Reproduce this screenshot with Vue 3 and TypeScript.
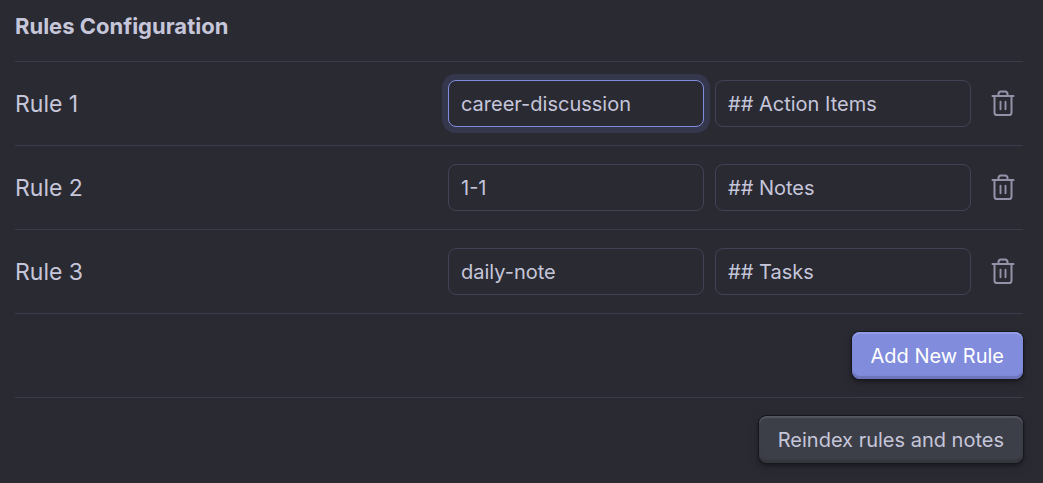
<script setup lang="ts">
import { ref } from 'vue'

interface Rule {
  id: number
  tag: string
  heading: string
}

const rules = ref<Rule[]>([
  { id: 1, tag: 'career-discussion', heading: '## Action Items' },
  { id: 2, tag: '1-1', heading: '## Notes' },
  { id: 3, tag: 'daily-note', heading: '## Tasks' },
])
const activeField = ref('tag-1')

function addRule(): void {
  const id = Math.max(0, ...rules.value.map((rule) => rule.id)) + 1
  rules.value.push({ id, tag: '', heading: '' })
}

function removeRule(id: number): void {
  rules.value = rules.value.filter((rule) => rule.id !== id)
}
</script>

<template>
  <main class="settings">
    <h1 class="title">Rules Configuration</h1>
    <div v-for="(rule, index) in rules" :key="rule.id" class="row">
      <label class="name" :for="`tag-${rule.id}`">Rule {{ index + 1 }}</label>
      <div class="controls">
        <input
          :id="`tag-${rule.id}`"
          v-model="rule.tag"
          class="field"
          :class="{ active: activeField === `tag-${rule.id}` }"
          type="text"
          spellcheck="false"
          @focus="activeField = `tag-${rule.id}`"
        />
        <input
          :id="`heading-${rule.id}`"
          v-model="rule.heading"
          class="field"
          :class="{ active: activeField === `heading-${rule.id}` }"
          type="text"
          spellcheck="false"
          :aria-label="`Rule ${index + 1} heading`"
          @focus="activeField = `heading-${rule.id}`"
        />
        <button class="remove" type="button" :aria-label="`Delete rule ${index + 1}`" @click="removeRule(rule.id)">
          <svg class="icon" viewBox="0 0 28 28" fill="none" stroke="currentColor" stroke-linecap="round" stroke-linejoin="round" aria-hidden="true">
            <path stroke-width="2" d="M3.5 6h21M9.5 5.8V4Q9.5 1.4 12 1.4h4Q18.5 1.4 18.5 4V5.8M5.5 6.2V22.4Q5.5 25 8.1 25H19.9Q22.5 25 22.5 22.4V6.2" />
            <path stroke-width="1.9" d="M11.5 11.7v7.5M16.5 11.7v7.5" />
          </svg>
        </button>
      </div>
    </div>
    <div class="row">
      <button class="button primary" type="button" @click="addRule">Add New Rule</button>
    </div>
    <div class="row">
      <button class="button" type="button">Reindex rules and notes</button>
    </div>
  </main>
</template>

<style>
body {
  margin: 0;
  background: #2a2a33;
}
</style>

<style scoped>
.settings {
  padding: 0 20px 0 15px;
  color: #c6c6da;
  font-family: Inter, "Liberation Sans", sans-serif;
}

.title {
  margin: 0;
  padding: 10px 0 19px;
  font-size: 22px;
  font-weight: 700;
  line-height: 32px;
}

.row {
  display: flex;
  align-items: center;
  justify-content: flex-end;
  padding: 18px 0;
  border-top: 1px solid #3c3b4b;
}

.name {
  flex: 1;
  font-size: 23px;
  line-height: 32px;
}

.controls {
  display: flex;
  align-items: center;
  gap: 11px;
}

.field {
  box-sizing: border-box;
  width: 256px;
  height: 47px;
  padding: 0 12px;
  border: 1px solid #434254;
  border-radius: 8px;
  outline: none;
  background: #2a2a33;
  color: inherit;
  font-family: inherit;
  font-size: 20px;
}

.field.active {
  border-color: #818cdd;
  box-shadow: 0 0 0 6px #35384d;
}

.remove {
  display: flex;
  align-items: center;
  justify-content: center;
  width: 41px;
  height: 47px;
  padding: 0;
  border: 0;
  background: transparent;
  color: #9292a8;
}

.icon {
  width: 28px;
  height: 28px;
}

.button {
  height: 47px;
  padding: 0 19px;
  border: 0;
  border-radius: 8px;
  background: #3d3f48;
  color: #c6c6da;
  font-family: inherit;
  font-size: 20px;
  box-shadow:
    inset 0 2px 1px #54555f,
    inset 0 -3px 2px #34363e,
    0 0 0 1px #17171c,
    0 2px 3px 1px #1b1b21,
    0 4px 8px #25252d;
}

.button.primary {
  background: #818cdd;
  color: #ffffff;
  box-shadow:
    inset 0 2px 1px #949de4,
    inset 0 -3px 1px #6c75ba,
    0 0 0 1px #17171c,
    0 2px 3px 1px #1b1b21,
    0 4px 8px #25252d;
}
</style>
